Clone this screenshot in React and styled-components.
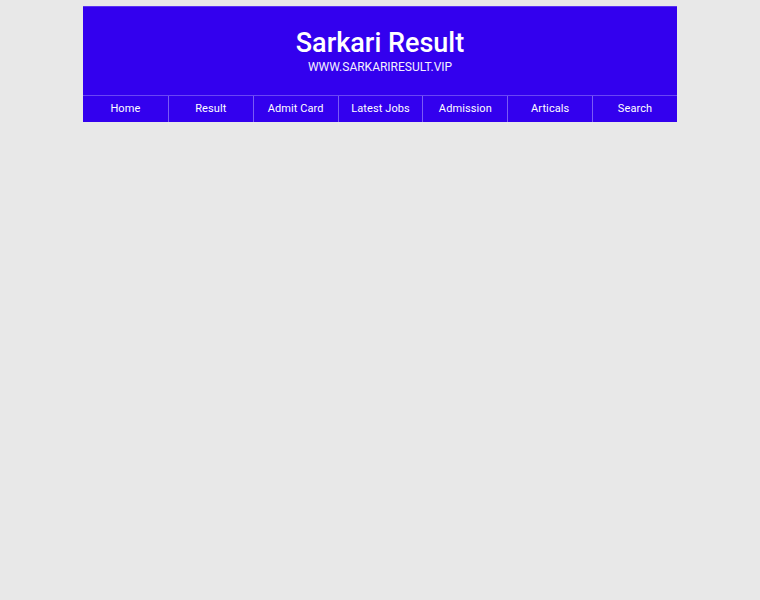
import React from "react";
import styled, { createGlobalStyle } from "styled-components";

const GlobalStyle = createGlobalStyle`
  html, body {
    margin: 0;
    padding: 0;
    background-color: #e8e8e8;
    font-family: Roboto, "Liberation Sans", sans-serif;
  }
`;

const Page = styled.div`
  min-height: 600px;
  padding-top: 6px;
`;

const Wrapper = styled.div`
  width: 594px;
  margin: 0 auto;
  background-color: #3300ee;
  border-top: 1px solid #5a33f2;
`;

const Header = styled.header`
  display: flex;
  flex-direction: column;
  align-items: center;
  padding: 20px 0 20px;
  color: #ffffff;
`;

const Title = styled.h1`
  margin: 0;
  font-size: 27px;
  font-weight: 500;
  line-height: 32px;
`;

const SubTitle = styled.div`
  font-size: 12px;
  line-height: 16px;
  color: #f4f0ff;
`;

const Nav = styled.nav`
  display: grid;
  grid-template-columns: repeat(7, 1fr);
  border-top: 1px solid #6a45f4;
`;

const NavItem = styled.a`
  display: flex;
  align-items: center;
  justify-content: center;
  height: 26px;
  padding-bottom: 1px;
  box-sizing: border-box;
  color: #ffffff;
  font-size: 11px;
  font-weight: 400;
  letter-spacing: 0.1px;
  text-decoration: none;
  border-left: ${(props) => (props.first ? "none" : "1px solid #7a5af5")};
  cursor: pointer;
`;

const links = [
  "Home",
  "Result",
  "Admit Card",
  "Latest Jobs",
  "Admission",
  "Articals",
  "Search",
];

function App() {
  return (
    <>
      <GlobalStyle />
      <Page>
        <Wrapper>
          <Header>
            <Title>Sarkari Result</Title>
            <SubTitle>WWW.SARKARIRESULT.VIP</SubTitle>
          </Header>
          <Nav>
            {links.map((label, index) => (
              <NavItem key={label} first={index === 0}>
                {label}
              </NavItem>
            ))}
          </Nav>
        </Wrapper>
      </Page>
    </>
  );
}

export default App;
